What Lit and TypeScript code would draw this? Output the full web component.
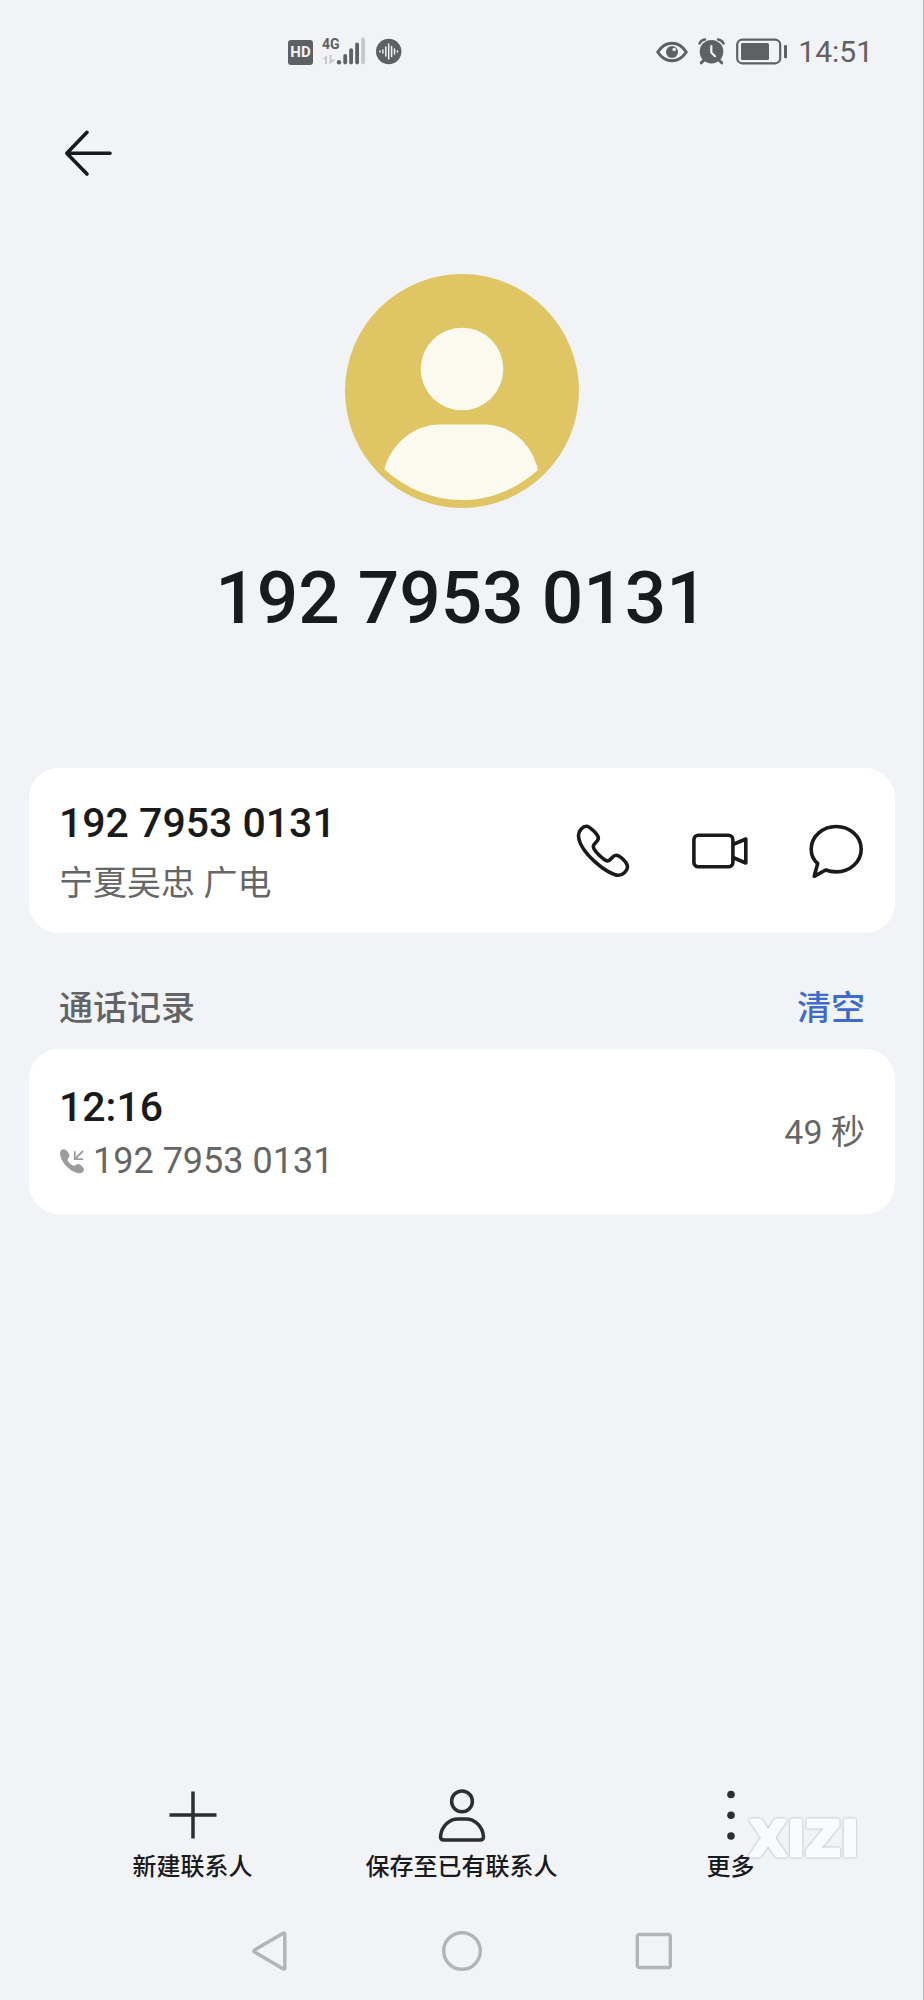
import { LitElement, html, css, svg } from "lit";
import { customElement, property } from "lit/decorators.js";

const FONT = css`Roboto, "Noto Sans CJK SC", sans-serif`;

const reset = css`
  * {
    box-sizing: border-box;
  }
  svg {
    display: block;
    flex: none;
  }
  button {
    appearance: none;
    border: 0;
    padding: 0;
    margin: 0;
    background: none;
    color: inherit;
    font: inherit;
    cursor: pointer;
  }
`;

@customElement("status-bar")
class StatusBar extends LitElement {
  static styles = [
    reset,
    css`
      :host {
        display: flex;
        justify-content: space-between;
        align-items: center;
        height: 104px;
        padding: 0 50px 0 288px;
        color: #5f6062;
      }
      .group {
        display: flex;
        align-items: center;
        gap: 8px;
      }
      .right {
        gap: 10px;
      }
      .hd {
        width: 25px;
        height: 25px;
        border-radius: 3px;
        background: #5f6062;
        color: #f1f3f7;
        font-size: 15px;
        font-weight: 700;
        line-height: 25px;
        text-align: center;
      }
      .net {
        font-size: 14px;
        font-weight: 700;
      }
      .clock {
        font-size: 30px;
        line-height: 36px;
      }
    `,
  ];

  render() {
    return html`
      <div class="group">
        <span class="hd">HD</span>
        <svg width="47" height="32" viewBox="0 0 47 32" fill="currentColor">
          <text class="net" x="1" y="13">4G</text>
          <path d="M1.500 23.500L6 19V28H4V23.500ZM8.500 19H10.500V23.500H14.500L8.500 28.500Z" fill="#c6c8cb" />
          <circle cx="18" cy="26.200" r="2.200" />
          <rect x="22.300" y="18" width="3.800" height="10.400" rx="1.800" />
          <rect x="28.200" y="12.300" width="3.800" height="16.100" rx="1.800" />
          <rect x="34.200" y="6.600" width="3.800" height="21.800" rx="1.800" />
          <rect x="40.200" y="1.600" width="3.800" height="26.800" rx="1.800" fill="#c6c8cb" />
        </svg>
        <svg width="26" height="32" viewBox="0 0 26 32">
          <circle cx="12.700" cy="15.500" r="12.700" fill="currentColor" />
          <path
            d="M4 15V16M6.900 14V17M9.800 11V20M12.700 8V23M15.600 10.500V20.500M18.500 13V18M21.400 15V16"
            stroke="#f1f3f7"
            stroke-width="1.500"
            stroke-linecap="round"
          />
        </svg>
      </div>
      <div class="group right">
        <svg width="32" height="32" viewBox="0 0 32 32">
          <path
            d="M1.700 16C6 9.500 11 7.200 16 7.200S26 9.500 30.300 16C26 22.500 21 24.800 16 24.800S6 22.500 1.700 16Z"
            fill="none"
            stroke="currentColor"
            stroke-width="3"
            stroke-linejoin="round"
          />
          <circle cx="16" cy="16" r="6" fill="currentColor" />
          <circle cx="18.200" cy="13.500" r="1.800" fill="#f1f3f7" />
        </svg>
        <svg width="28" height="32" viewBox="0 0 28 32" fill="none" stroke-linecap="round" stroke-linejoin="round">
          <circle cx="13.500" cy="15.700" r="11.800" fill="currentColor" />
          <path d="M1.500 7.500Q3 4 7 3.500M25.500 7.500Q24 4 20 3.500" stroke="currentColor" stroke-width="2.400" />
          <path d="M6 24L3.300 26.800M21 24L23.700 26.800" stroke="currentColor" stroke-width="3" />
          <path d="M13.300 10V16.500L17 20.200" stroke="#f1f3f7" stroke-width="2.200" />
        </svg>
        <svg width="52" height="32" viewBox="0 0 52 32">
          <rect x="1.200" y="3.700" width="43" height="23.600" rx="5" fill="none" stroke="currentColor" stroke-width="2.200" />
          <rect x="5" y="7" width="28" height="17" rx="1.500" fill="currentColor" />
          <rect x="48" y="9" width="3" height="13.300" rx="1" fill="currentColor" />
        </svg>
        <time class="clock">14:51</time>
      </div>
    `;
  }
}

@customElement("info-card")
class InfoCard extends LitElement {
  static styles = [
    reset,
    css`
      :host {
        display: flex;
        align-items: center;
        justify-content: space-between;
        min-height: 165px;
        margin: 0 28px 0 29px;
        padding: 24px 30px;
        border-radius: 30px;
        background: #fff;
      }
    `,
  ];

  render() {
    return html`<slot name="main"></slot><slot name="side"></slot>`;
  }
}

const tabIcons = {
  plus: svg`<path d="M28 4.500V51.500M4.500 28H51.500" />`,
  person: svg`
    <circle cx="28" cy="14.300" r="10.400" />
    <path d="M6.500 49.500C7.500 39 15.500 32 24 32H32C40.500 32 48.500 39 49.500 49.500Q49.500 53 46 53H10Q6.500 53 6.500 49.500Z" />`,
  more: svg`
    <g fill="currentColor" stroke="none">
      <circle cx="28" cy="7.500" r="3.800" />
      <circle cx="28" cy="28.300" r="3.800" />
      <circle cx="28" cy="49" r="3.800" />
    </g>`,
};

@customElement("tab-button")
class TabButton extends LitElement {
  @property() icon: keyof typeof tabIcons = "plus";
  @property() label = "";

  static styles = [
    reset,
    css`
      :host {
        display: flex;
        justify-content: center;
      }
      button {
        display: flex;
        flex-direction: column;
        align-items: center;
        gap: 8px;
        font-size: 24px;
        font-weight: 500;
        line-height: 32px;
        white-space: nowrap;
      }
      svg {
        color: #2c2e31;
      }
    `,
  ];

  render() {
    return html`
      <button type="button">
        <svg width="56" height="56" viewBox="0 0 56 56" fill="none" stroke="currentColor" stroke-width="3.500">
          ${tabIcons[this.icon]}
        </svg>
        <span>${this.label}</span>
      </button>
    `;
  }
}

@customElement("app-root")
class AppRoot extends LitElement {
  static styles = [
    reset,
    css`
      :host {
        display: flex;
        flex-direction: column;
        box-sizing: border-box;
        min-height: 100vh;
        border-right: 1px solid #b9bbbf;
        background: #f1f3f7;
        color: #191a1b;
        font-family: ${FONT};
      }
      .top {
        display: flex;
        padding: 25px 64px 0;
      }
      main {
        flex: 1;
      }
      .profile {
        display: flex;
        flex-direction: column;
        align-items: center;
        gap: 48px;
        padding: 97px 0 128px;
      }
      h1 {
        margin: 0;
        font-size: 73px;
        font-weight: 500;
        line-height: 84px;
      }
      .lines {
        padding-top: 5px;
      }
      .strong {
        font-size: 41px;
        font-weight: 500;
        line-height: 48px;
      }
      .place {
        margin-top: 12px;
        font-size: 34px;
        line-height: 48px;
        color: #666;
      }
      .actions {
        display: flex;
        gap: 61px;
      }
      .section {
        display: flex;
        align-items: center;
        justify-content: space-between;
        padding: 51px 58px 17px 59px;
        font-size: 34px;
        font-weight: 500;
        line-height: 48px;
      }
      h2 {
        margin: 0;
        font: inherit;
        color: #616365;
      }
      .clear {
        color: #3e6bd0;
      }
      .call {
        display: flex;
        align-items: center;
        gap: 8px;
        margin-top: 6px;
        font-size: 36px;
        line-height: 48px;
        color: #666;
      }
      .call svg {
        color: #9c9c9c;
      }
      .duration {
        font-size: 34px;
        line-height: 48px;
        color: #666;
      }
      .tabs {
        position: relative;
        display: grid;
        grid-template-columns: repeat(3, 1fr);
        padding: 0 58px;
      }
      .mark {
        position: absolute;
        top: 29px;
        right: 64px;
        overflow: visible;
        fill: #fafbfd;
        stroke: #fafbfd;
        stroke-width: 3px;
        stroke-linejoin: round;
        font-family: "DejaVu Sans", sans-serif;
        font-size: 49px;
        font-weight: 700;
        filter: drop-shadow(0 0 1px #a0a3a8);
        pointer-events: none;
      }
      .nav {
        display: grid;
        grid-template-columns: repeat(3, 192px);
        justify-content: center;
        justify-items: center;
        padding: 46px 0 27px;
        color: #b2b4b6;
      }
    `,
  ];

  render() {
    return html`
      <status-bar></status-bar>
      <header class="top">
        <button type="button" aria-label="返回">
          <svg width="48" height="48" viewBox="0 0 48 48" fill="none" stroke="currentColor" stroke-width="3.600" stroke-linecap="round" stroke-linejoin="round">
            <path d="M46 24.200H3M23 3.300L2.800 24.200L23 45" />
          </svg>
        </button>
      </header>
      <main>
        <section class="profile">
          <svg width="234" height="234" viewBox="0 0 234 234">
            <circle cx="117" cy="117" r="117" fill="#dfc563" />
            <circle cx="117" cy="95" r="41.300" fill="#fcfaef" />
            <path
              d="M39.300 195C47 169 69 150.500 95 150.500H139C165 150.500 187 169 193 196C172 215 145 226 117 226C88 226 60 214.500 39.300 195Z"
              fill="#fcfaef"
            />
          </svg>
          <h1>192 7953 0131</h1>
        </section>

        <info-card>
          <div slot="main" class="lines">
            <div class="strong">192 7953 0131</div>
            <div class="place">宁夏吴忠 广电</div>
          </div>
          <div slot="side" class="actions">
            <button type="button" aria-label="拨打电话">
              <svg width="56" height="56" viewBox="0 0 56 56" fill="none" stroke="currentColor" stroke-width="3.600" stroke-linejoin="round">
                <path d="M3.500 12.500C3.500 7.500 8 3.200 11.500 3.200C14.500 3.200 22.500 11 23.300 14.500C24 18.500 18.700 19.500 18.300 23.500C18.500 27.500 27.500 36 31.700 37.800C36.500 38.800 36.500 32.300 41 32.300C45 32.300 52.500 39.500 52.500 44C52.500 47.500 48 52.300 43.500 52.300C33 52.300 4 29 3.500 12.500Z" />
              </svg>
            </button>
            <button type="button" aria-label="视频通话">
              <svg width="56" height="56" viewBox="0 0 56 56" fill="none" stroke="currentColor" stroke-width="3.600" stroke-linejoin="round">
                <rect x="1.900" y="12.200" width="39" height="31.500" rx="4.500" />
                <path d="M41 21.500L53.800 16V40L41 34.500" />
              </svg>
            </button>
            <button type="button" aria-label="发送信息">
              <svg width="56" height="56" viewBox="0 0 56 56" fill="none" stroke="currentColor" stroke-width="3.600" stroke-linejoin="round">
                <path d="M8.700 40.500L5.200 53.300L16.700 47C20 48.300 23.500 48.900 27.200 48.900C41 48.900 52.200 38.800 52.200 26.200S41 3.500 27.200 3.500S2.200 13.600 2.200 26.200C2.200 31.700 4.500 37 8.700 40.500Z" />
              </svg>
            </button>
          </div>
        </info-card>

        <div class="section">
          <h2>通话记录</h2>
          <button type="button" class="clear">清空</button>
        </div>

        <info-card>
          <div slot="main" class="lines">
            <div class="strong">12:16</div>
            <div class="call">
              <svg width="26" height="26" viewBox="0 0 26 26">
                <path d="M1 5C1 2.500 3.200 .8 5.300 1.200C8 2 10.800 6 10.500 8C10.200 10 8.300 10.300 8.500 12C9 14 12.500 17.300 14.800 17.800C16.500 18 17 16 19 16C21.200 16 25 19.500 25 21.500C25 24 22.500 25.500 20 25.300C11.500 24.500 1 13.500 1 5Z" fill="currentColor" />
                <path d="M24 3L16.300 10.700M15.800 3.300V11.200H24" fill="none" stroke="currentColor" stroke-width="1.800" />
              </svg>
              <span>192 7953 0131</span>
            </div>
          </div>
          <div slot="side" class="duration">49 秒</div>
        </info-card>
      </main>

      <div class="tabs">
        <tab-button icon="plus" label="新建联系人"></tab-button>
        <tab-button icon="person" label="保存至已有联系人"></tab-button>
        <tab-button icon="more" label="更多"></tab-button>
        <svg class="mark" width="116" height="48" viewBox="0 0 116 48">
          <text x="116" y="40" text-anchor="end">XIZI</text>
        </svg>
      </div>
      <nav class="nav">
        <button type="button" aria-label="后退">
          <svg width="44" height="44" viewBox="0 0 44 44" fill="none" stroke="currentColor" stroke-width="3.400" stroke-linejoin="round">
            <path d="M6.500 21Q5.300 22 6.500 23L35.500 40Q36.800 40.500 36.800 39V5Q36.800 3.500 35.500 4Z" />
          </svg>
        </button>
        <button type="button" aria-label="主屏幕">
          <svg width="44" height="44" viewBox="0 0 44 44" fill="none" stroke="currentColor" stroke-width="3.400">
            <circle cx="22" cy="22" r="18.300" />
          </svg>
        </button>
        <button type="button" aria-label="最近任务">
          <svg width="44" height="44" viewBox="0 0 44 44" fill="none" stroke="currentColor" stroke-width="3.400">
            <rect x="5.300" y="5.500" width="33" height="33" rx="2" />
          </svg>
        </button>
      </nav>
    `;
  }
}
